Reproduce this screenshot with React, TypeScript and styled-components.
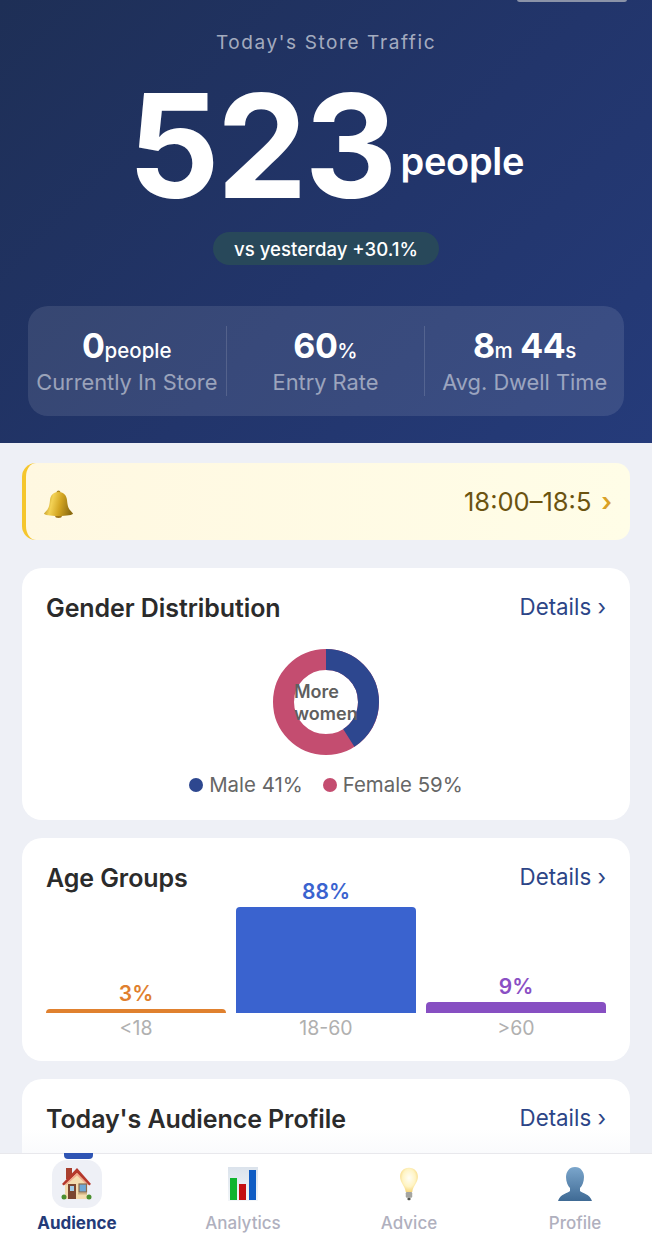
import styled, { createGlobalStyle } from "styled-components";

const GlobalStyle = createGlobalStyle`
  html, body { margin: 0; padding: 0; background: #eef0f6; }
  body { font-family: Inter, "Liberation Sans", sans-serif; }
  * { box-sizing: border-box; }
`;

const Page = styled.div`
  width: 652px;
  height: 1250px;
  display: flex;
  flex-direction: column;
  overflow: hidden;
  background: #eef0f6;
`;

const Scroll = styled.div`
  position: relative;
  height: 1153px;
  flex: none;
  overflow: hidden;
`;

const Hero = styled.header`
  position: relative;
  height: 443px;
  padding-top: 32px;
  background: linear-gradient(135deg, #1e2f56 0%, #22356b 55%, #253b7a 100%);
  display: flex;
  flex-direction: column;
  align-items: center;
`;

const TopNotch = styled.div`
  position: absolute;
  top: -3px;
  right: 25px;
  width: 110px;
  height: 5px;
  border-radius: 3px;
  background: #8b93a8;
`;

const HeroTitle = styled.div`
  font-size: 19px;
  line-height: 22px;
  letter-spacing: 1.6px;
  color: rgba(255, 255, 255, 0.6);
`;

const BigRow = styled.div`
  margin-top: 18px;
  height: 147px;
  display: flex;
  align-items: flex-end;
  gap: 6px;
  color: #fff;
`;

const BigNumber = styled.span`
  font-size: 144px;
  line-height: 147px;
  font-weight: 700;
  letter-spacing: -3px;
`;

const BigUnit = styled.span`
  font-size: 38px;
  line-height: 38px;
  margin-bottom: 39px;
  font-weight: 600;
  letter-spacing: -0.3px;
`;

const Trend = styled.div`
  margin-top: 13px;
  height: 33px;
  padding: 0 21px;
  display: flex;
  align-items: center;
  border-radius: 17px;
  background: #28485a;
  color: #fff;
  font-size: 18.6px;
  font-weight: 500;
`;

const Stats = styled.div`
  margin-top: 41px;
  width: 596px;
  height: 110px;
  padding: 20px 0;
  display: grid;
  grid-template-columns: repeat(3, 1fr);
  border-radius: 20px;
  background: rgba(255, 255, 255, 0.1);
`;

const Stat = styled.div<{ $divider?: boolean }>`
  display: flex;
  flex-direction: column;
  align-items: center;
  border-right: ${(p) => (p.$divider ? "1px solid rgba(255, 255, 255, 0.14)" : "none")};
`;

const StatValue = styled.div`
  height: 40px;
  line-height: 40px;
  color: #fff;
  font-size: 34px;
  font-weight: 700;
  white-space: nowrap;
  letter-spacing: -0.5px;
`;

const StatUnit = styled.span`
  font-size: 20.5px;
  font-weight: 500;
  letter-spacing: 0;
`;

const StatLabel = styled.div`
  margin-top: 3px;
  font-size: 21.8px;
  line-height: 26px;
  color: rgba(255, 255, 255, 0.5);
  white-space: nowrap;
`;

const Body = styled.main`
  padding: 20px 22px 0;
  display: flex;
  flex-direction: column;
`;

const Banner = styled.div`
  height: 77px;
  padding: 0 18px 0 15px;
  display: flex;
  align-items: center;
  border-left: 4px solid #f5c62d;
  border-radius: 14px;
  background: linear-gradient(90deg, #fff8e1, #fffde7);
`;

const BannerText = styled.div`
  flex: 1;
  min-width: 0;
  margin: 0 9px 0 20px;
  overflow: hidden;
  padding-left: 369px;
  height: 30px;
  line-height: 30px;
  white-space: nowrap;
  font-size: 25.5px;
  color: #6b5310;
`;

const BannerArrow = styled.span`
  font-size: 26px;
  font-weight: 600;
  color: #d9a126;
  line-height: 30px;
`;

const Card = styled.section<{ $height: number; $top: number }>`
  height: ${(p) => p.$height}px;
  margin-top: ${(p) => p.$top}px;
  padding: 24px 24px 0;
  flex: none;
  border-radius: 20px;
  background: #fff;
`;

const CardHead = styled.div`
  display: flex;
  align-items: center;
  justify-content: space-between;
  height: 32px;
`;

const CardTitle = styled.h2`
  margin: 0;
  font-size: 25px;
  font-weight: 600;
  color: #2b2b2b;
  letter-spacing: -0.08px;
`;

const DetailsLink = styled.a`
  margin-bottom: 3px;
  font-size: 22.3px;
  color: #2c4587;
`;

const DonutWrap = styled.div`
  position: relative;
  width: 106px;
  height: 106px;
  margin: 25px auto 0;
`;

const DonutLabel = styled.div`
  position: absolute;
  inset: 32px 0 0 21px;
  width: 66px;
  font-size: 18px;
  line-height: 22px;
  font-weight: 600;
  color: #5f5f5f;
`;

const Legend = styled.div`
  margin-top: 17px;
  display: flex;
  justify-content: center;
  gap: 20px;
`;

const LegendItem = styled.div`
  display: flex;
  align-items: center;
  gap: 6px;
  font-size: 20.4px;
  line-height: 26px;
  color: #666;
`;

const Dot = styled.span<{ $color: string }>`
  width: 14px;
  height: 14px;
  border-radius: 50%;
  background: ${(p) => p.$color};
`;

const Bars = styled.div`
  height: 134px;
  display: grid;
  grid-template-columns: repeat(3, 1fr);
  gap: 10px;
  margin-top: -15px;
`;

const BarCol = styled.div`
  display: flex;
  flex-direction: column;
  align-items: stretch;
  justify-content: flex-end;
`;

const BarValue = styled.div<{ $color: string }>`
  text-align: center;
  font-size: 21px;
  line-height: 26px;
  font-weight: 600;
  color: ${(p) => p.$color};
  margin-bottom: 2px;
`;

const Bar = styled.div<{ $color: string; $height: number }>`
  height: ${(p) => p.$height}px;
  border-radius: 4px 4px 0 0;
  background: ${(p) => p.$color};
`;

const BarLabels = styled.div`
  display: grid;
  grid-template-columns: repeat(3, 1fr);
  gap: 10px;
  margin-top: 3px;
`;

const BarLabel = styled.div`
  text-align: center;
  font-size: 19.5px;
  line-height: 24px;
  color: #b0b0b0;
`;

const Fade = styled.div`
  position: absolute;
  left: 0;
  right: 0;
  bottom: 0;
  height: 24px;
  background: linear-gradient(to bottom, rgba(238, 240, 246, 0), rgba(238, 240, 246, 0.3));
`;

const TabBar = styled.nav`
  width: 664px;
  height: 97px;
  margin-left: -6px;
  flex: none;
  display: grid;
  grid-template-columns: repeat(4, 1fr);
  background: #fff;
  border-top: 1px solid #e8e8ec;
`;

const Tab = styled.div`
  position: relative;
  display: flex;
  flex-direction: column;
  align-items: center;
  padding-top: 6px;
`;

const TabIcon = styled.div<{ $active?: boolean }>`
  width: 50px;
  height: 48px;
  display: flex;
  align-items: center;
  justify-content: center;
  border-radius: 15px;
  background: ${(p) => (p.$active ? "#eef0f6" : "transparent")};
`;

const TabMark = styled.span`
  position: absolute;
  top: -1px;
  left: 70px;
  width: 29px;
  height: 6px;
  border-radius: 0 0 4px 4px;
  background: #2f55b4;
`;

const TabLabel = styled.div<{ $active?: boolean }>`
  margin-top: 4px;
  font-size: 17px;
  line-height: 22px;
  font-weight: ${(p) => (p.$active ? 700 : 500)};
  color: ${(p) => (p.$active ? "#243a78" : "#b0b0be")};
`;

const Bell = () => (
  <svg width="34" height="32" viewBox="0 0 34 32">
    <defs>
      <linearGradient id="bell" x1="0" x2="1" y1="0.2" y2="0.4">
        <stop offset="0" stopColor="#a97f14" />
        <stop offset="0.3" stopColor="#f3d255" />
        <stop offset="0.6" stopColor="#d3a521" />
        <stop offset="1" stopColor="#8d6c10" />
      </linearGradient>
    </defs>
    <circle cx="17.500" cy="6.500" r="2" fill="#b08a1e" />
    <ellipse cx="17.500" cy="29.500" rx="3.500" ry="2.500" fill="#a0751a" />
    <path d="M17.500 6c-5 0-8 3-8.500 8-.5 5-1 7-2.500 9.500L3 27.500c0 1.500 6 2.500 14.500 2.500S32 29 32 27.500l-3.500-4C27 21 26.500 19 26 14c-.5-5-3.500-8-8.500-8z" fill="url(#bell)" />
  </svg>
);

const HouseIcon = () => (
  <svg width="36" height="36" viewBox="0 0 36 36">
    <rect x="7" y="2" width="6" height="11" fill="#a8402f" />
    <path d="M6 17 18 6l10 11v16H6z" fill="#f4dcae" />
    <path d="M3 18 18 2l14 16-1.800 1.500L18 7 4.800 19.500z" fill="#b5382c" />
    <path d="M6 18.500 18 7l11 11.500-1 .5L18 9.500 7 19z" fill="#f0a58a" />
    <rect x="9" y="18" width="8" height="15" fill="#7c4630" />
    <rect x="11" y="20" width="4" height="5" fill="#a5cde6" />
    <rect x="20" y="18" width="7.500" height="8" fill="#6fa8d6" stroke="#8a6a4c" strokeWidth="1.200" />
    <rect x="19" y="27" width="9" height="1.500" fill="#d0b283" />
    <circle cx="5" cy="31" r="2.500" fill="#4b8f2f" />
    <circle cx="30" cy="31" r="2.500" fill="#4b8f2f" />
  </svg>
);

const ChartIcon = () => (
  <svg width="30" height="34" viewBox="0 0 30 34">
    <defs>
      <linearGradient id="chartBg" x1="0" x2="0" y1="0" y2="1">
        <stop offset="0" stopColor="#dbe3ec" />
        <stop offset="1" stopColor="#f3f6f9" />
      </linearGradient>
    </defs>
    <rect width="30" height="34" fill="url(#chartBg)" />
    <rect x="2" y="11" width="7" height="22" fill="#0fb42f" />
    <rect x="11" y="17" width="7" height="16" fill="#c40f12" />
    <rect x="21" y="3" width="7" height="30" fill="#0f5cc4" />
  </svg>
);

const BulbIcon = () => (
  <svg width="20" height="34" viewBox="0 0 24 42">
    <defs>
      <radialGradient id="glow" cx="0.5" cy="0.42" r="0.6">
        <stop offset="0" stopColor="#fffef6" />
        <stop offset="0.6" stopColor="#fff4c4" />
        <stop offset="1" stopColor="#f5d272" />
      </radialGradient>
    </defs>
    <path d="M12 1C5 1 1 6 1 12c0 7 6 11 7 19h8c1-8 7-12 7-19 0-6-4-11-11-11z" fill="url(#glow)" />
    <rect x="8" y="31" width="8" height="7" rx="1.500" fill="#a5a5a0" />
    <rect x="10" y="38" width="4" height="3" rx="1.500" fill="#55554f" />
  </svg>
);

const PersonIcon = () => (
  <svg width="34" height="34" viewBox="0 0 34 34">
    <defs>
      <linearGradient id="person" x1="0" x2="0" y1="0" y2="1">
        <stop offset="0" stopColor="#7ba6cc" />
        <stop offset="1" stopColor="#3f6a94" />
      </linearGradient>
    </defs>
    <path d="M17 0C11 0 8 5 8 10c0 5 2 9 4 11v3c-2 2-10 3-12 10h34c-2-7-10-8-12-10v-3c2-2 4-6 4-11 0-5-3-10-9-10z" fill="url(#person)" />
  </svg>
);

export default function App() {
  const bars = [
    { label: "<18", value: "3%", height: 4, text: "#e07f2e", fill: "#e0812f" },
    { label: "18-60", value: "88%", height: 106, text: "#3a63cf", fill: "#3a63cf" },
    { label: ">60", value: "9%", height: 11, text: "#8a4fc4", fill: "#874fc2" },
  ];
  const tabs = [
    { label: "Audience", icon: <HouseIcon />, active: true },
    { label: "Analytics", icon: <ChartIcon /> },
    { label: "Advice", icon: <BulbIcon /> },
    { label: "Profile", icon: <PersonIcon /> },
  ];

  return (
    <Page>
      <GlobalStyle />
      <Scroll>
        <Hero>
          <TopNotch />
          <HeroTitle>Today's Store Traffic</HeroTitle>
          <BigRow>
            <BigNumber>523</BigNumber>
            <BigUnit>people</BigUnit>
          </BigRow>
          <Trend>vs yesterday +30.1%</Trend>
          <Stats>
            <Stat $divider>
              <StatValue>0<StatUnit>people</StatUnit></StatValue>
              <StatLabel>Currently In Store</StatLabel>
            </Stat>
            <Stat $divider>
              <StatValue>60<StatUnit>%</StatUnit></StatValue>
              <StatLabel>Entry Rate</StatLabel>
            </Stat>
            <Stat>
              <StatValue>8<StatUnit>m</StatUnit> 44<StatUnit>s</StatUnit></StatValue>
              <StatLabel>Avg. Dwell Time</StatLabel>
            </Stat>
          </Stats>
        </Hero>
        <Body>
          <Banner>
            <Bell />
            <BannerText>18:00–18:59</BannerText>
            <BannerArrow>›</BannerArrow>
          </Banner>
          <Card $height={252} $top={28}>
            <CardHead>
              <CardTitle>Gender Distribution</CardTitle>
              <DetailsLink>Details ›</DetailsLink>
            </CardHead>
            <DonutWrap>
              <svg width="106" height="106" viewBox="0 0 106 106">
                <circle cx="53" cy="53" r="42.500" fill="none" stroke="#c44d70" strokeWidth="21" />
                <circle
                  cx="53"
                  cy="53"
                  r="42.500"
                  fill="none"
                  stroke="#2d478f"
                  strokeWidth="21"
                  pathLength="100"
                  strokeDasharray="41 59"
                  transform="rotate(-90 53 53)"
                />
              </svg>
              <DonutLabel>More women</DonutLabel>
            </DonutWrap>
            <Legend>
              <LegendItem><Dot $color="#2d478f" />Male 41%</LegendItem>
              <LegendItem><Dot $color="#c44d70" />Female 59%</LegendItem>
            </Legend>
          </Card>
          <Card $height={223} $top={18}>
            <CardHead>
              <CardTitle>Age Groups</CardTitle>
              <DetailsLink>Details ›</DetailsLink>
            </CardHead>
            <Bars>
              {bars.map((b) => (
                <BarCol key={b.label}>
                  <BarValue $color={b.text}>{b.value}</BarValue>
                  <Bar $color={b.fill} $height={b.height} />
                </BarCol>
              ))}
            </Bars>
            <BarLabels>
              {bars.map((b) => (
                <BarLabel key={b.label}>{b.label}</BarLabel>
              ))}
            </BarLabels>
          </Card>
          <Card $height={120} $top={18}>
            <CardHead>
              <CardTitle>Today's Audience Profile</CardTitle>
              <DetailsLink>Details ›</DetailsLink>
            </CardHead>
          </Card>
        </Body>
        <Fade />
      </Scroll>
      <TabBar>
        {tabs.map((t) => (
          <Tab key={t.label}>
            {t.active && <TabMark />}
            <TabIcon $active={t.active}>{t.icon}</TabIcon>
            <TabLabel $active={t.active}>{t.label}</TabLabel>
          </Tab>
        ))}
      </TabBar>
    </Page>
  );
}
